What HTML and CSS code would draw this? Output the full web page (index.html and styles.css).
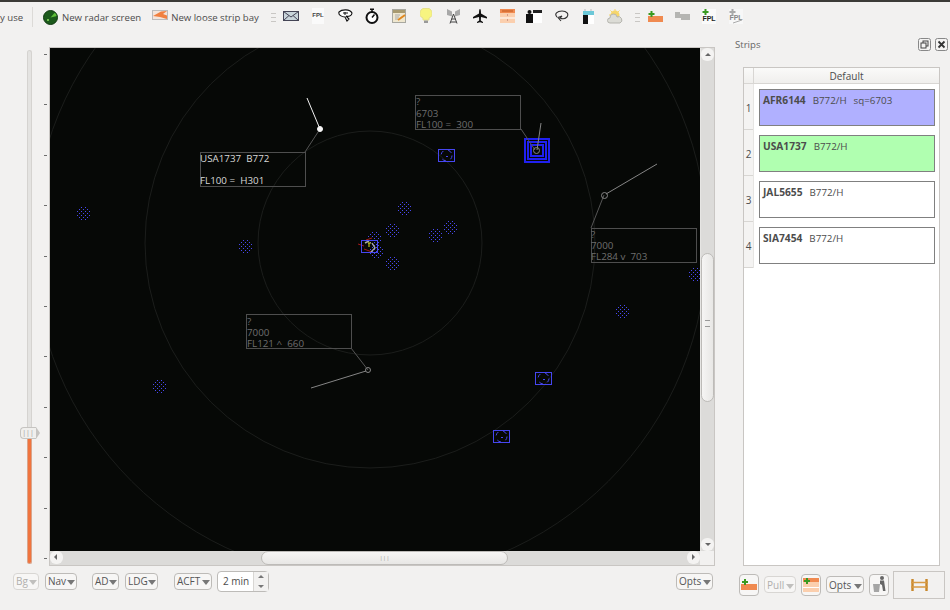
FILE: index.html
```html
<!DOCTYPE html>
<html lang="en">
<head>
    <meta charset="UTF-8">
    <title>Radar</title>
    <link rel="stylesheet" href="styles.css">
</head>
<body>
<div class="app">
    <div class="topline"></div>

    <!-- Toolbar -->
    <div class="toolbar">
        <span class="tool-text clipped">y use</span>
        <span class="tool-sep"></span>
        <svg class="tb-radar" width="15" height="15" viewBox="0 0 15 15"><circle cx="7.5" cy="7.5" r="7" fill="#1c5a1c"/><path d="M7.5 7.5L12 2.5A7 7 0 0 1 14 6z" fill="#5fc03a"/><circle cx="5" cy="10" r="1" fill="#8fe060"/><circle cx="7.5" cy="7.5" r="7" fill="none" stroke="#123a12"/></svg>
        <span class="tool-text">New radar screen</span>
        <svg class="tb-bay" width="16" height="12" viewBox="0 0 16 12"><rect x=".5" y=".5" width="15" height="9" fill="#f4e4da" stroke="#bbb"/><path d="M1 6L9 1.5L15 1L11 4L15 5.5V9L8 7z" fill="#f08040"/></svg>
        <span class="tool-text">New loose strip bay</span>
        <span class="handle first"><i></i><i></i><i></i></span>

        <span class="tool"><svg width="16" height="10" viewBox="0 0 16 10"><rect x=".5" y=".5" width="15" height="9" fill="#c8d4da" stroke="#445"/><path d="M.5 .5L8 6L15.5 .5M.5 9.5L6 4.5M15.5 9.5L10 4.5" fill="none" stroke="#445"/></svg></span>
        <span class="tool"><svg width="12" height="16" viewBox="0 0 12 16"><rect width="12" height="16" fill="#fafafa"/><text x="6" y="9" class="fpl-mini">FPL</text></svg></span>
        <span class="tool"><svg width="15" height="14" viewBox="0 0 15 14"><path d="M1 3C4 0 12 0 14 4C14 7 10 8 8 7L11 10L9 12L7 8C4 8 0 6 1 3z" fill="#fff" stroke="#111" stroke-width="1.1"/><path d="M5 4H10M7 3V6" stroke="#111"/></svg></span>
        <span class="tool"><svg width="14" height="16" viewBox="0 0 14 16"><circle cx="7" cy="9.5" r="5.5" fill="#fff" stroke="#111" stroke-width="2"/><path d="M5 1.2H9M7 2V4M7 9.5L9.5 6.5" stroke="#111" stroke-width="1.5"/></svg></span>
        <span class="tool"><svg width="15" height="15" viewBox="0 0 15 15"><rect x=".5" y=".5" width="13" height="13" fill="#efe7cf" stroke="#a8a8a0"/><rect x="1" y="1" width="12" height="3" fill="#a89a70"/><path d="M3 6H8M3 8H7M3 10H6" stroke="#aaa"/><path d="M6 11L13 6" stroke="#e08820" stroke-width="2"/></svg></span>
        <span class="tool"><svg width="12" height="16" viewBox="0 0 12 16"><path d="M6 .5A5 5 0 0 1 9 10V12H3V10A5 5 0 0 1 6 .5z" fill="#f7f480" stroke="#e5e08a"/><rect x="4" y="12.5" width="4" height="2.5" fill="#999"/></svg></span>
        <span class="tool"><svg width="13" height="16" viewBox="0 0 13 16"><path d="M0 1L5 3.5V8.5L0 7zM13 1L8 3.5V8.5L13 7z" fill="#a8a8a8"/><path d="M6.5 6L3 15.5M6.5 6L10 15.5M4.5 11H8.5M3.5 14H9.5" stroke="#444" fill="none"/></svg></span>
        <span class="tool"><svg width="14" height="14" viewBox="0 0 14 14"><path d="M7 0C7.8 0 8 2 8 4.5L14 8V9.5L8 8L7.8 11.5L10 13V14L7 13.3L4 14V13L6.2 11.5L6 8L0 9.5V8L6 4.5C6 2 6.2 0 7 0z" fill="#111"/></svg></span>
        <span class="tool"><svg width="15" height="14" viewBox="0 0 15 14"><rect width="15" height="14" fill="#fbcfae"/><rect width="15" height="4" fill="#f08a50"/><rect y="8.5" width="15" height="1" fill="#fff"/><path d="M7 6h1M7 11h1" stroke="#a66"/><path d="M2 2H13" stroke="#c05a20"/></svg></span>
        <span class="tool"><svg width="16" height="13" viewBox="0 0 16 13"><rect x="7" y="3" width="9" height="10" fill="#fff"/><rect y="4" width="7" height="9" fill="#111"/><rect x="7" y="0" width="9" height="3" fill="#222"/><circle cx="3.5" cy="2" r="2" fill="#111"/></svg></span>
        <span class="tool"><svg width="15" height="12" viewBox="0 0 15 12"><path d="M3 7C0 4 3 1 8 1C13 1 15 4 13 7C11 9 8 9 6 8L8 6L4 7.5L7 11" fill="none" stroke="#333" stroke-width="1.1"/></svg></span>
        <span class="tool"><svg width="11" height="15" viewBox="0 0 11 15"><rect y="5" width="5" height="10" fill="#111"/><rect x="5" y="5" width="6" height="10" fill="#fff"/><rect y="2" width="11" height="4" fill="#6cc8d8"/><path d="M2 0V2M8 0V2" stroke="#bbb"/></svg></span>
        <span class="tool"><svg width="16" height="15" viewBox="0 0 16 15"><circle cx="8" cy="6" r="4.5" fill="#f6d66a"/><path d="M8 0V2M2 6H4M3.5 1.5L5 3M12.5 1.5L11 3" stroke="#f6d66a"/><path d="M3 14A2.5 2.5 0 0 1 3 9A3.5 3.5 0 0 1 10 8A3 3 0 0 1 13 14z" fill="#dcdcd6" stroke="#b5b5ae"/></svg></span>
        <span class="handle second"><i></i><i></i><i></i></span>
        <span class="tool"><svg width="15" height="11" viewBox="0 0 15 11"><rect y="5" width="15" height="6" fill="#f08a50"/><path d="M3.5 0V6M.5 3H6.5" stroke="#3a9a20" stroke-width="2"/></svg></span>
        <span class="tool"><svg width="15" height="10" viewBox="0 0 15 10"><path d="M0 1H5V3H15V9H6V7H0z" fill="#b5b5b2"/></svg></span>
        <span class="tool"><svg width="14" height="15" viewBox="0 0 14 15"><rect width="14" height="15" y="0" fill="#fafafa"/><path d="M3.5 0V6M.5 3H6.5" stroke="#3a9a20" stroke-width="2"/><text x="7" y="12" class="fpl-mini dark">FPL</text></svg></span>
        <span class="tool"><svg width="14" height="15" viewBox="0 0 14 15"><rect width="14" height="15" fill="#f7f7f7"/><path d="M3.5 0V6M.5 3H6.5" stroke="#aaa" stroke-width="2"/><text x="7" y="11" class="fpl-mini pale">FPL</text><path d="M4 14L13 11" stroke="#aaa"/></svg></span>
    </div>

    <div class="main">
        <!-- Radar pane -->
        <div class="radar-pane">
            <div class="work">
                <div class="zoom">
                    <div class="zoom-track">
                        <div class="groove-top"></div>
                        <div class="zoom-handle"><span>|||</span></div>
                        <div class="groove-low"></div>
                    </div>
                    <div class="ticks"><i></i><i></i><i></i><i></i><i></i><i></i><i></i><i></i><i></i><i></i><i></i></div>
                </div>

                <div class="view">
                    <svg class="scope" width="650" height="503" viewBox="50 48 650 503">
                        <defs>
                            <path id="navdots" class="dots" d="M-2-6h1M2-6h1M-4-4h1M0-4h1M4-4h1M-6-2h1M-2-2h1M2-2h1M6-2h1M-4 0h1M0 0h1M4 0h1M-6 2h1M-2 2h1M2 2h1M6 2h1M-4 4h1M0 4h1M4 4h1M-2 6h1M2 6h1"/>
                            <g id="target">
                                <rect class="target-box" x="-8" y="-6" width="16" height="12"/>
                                <circle class="target-ring" r="5.5"/>
                                <path class="target-box" d="M-1 .5H1"/>
                            </g>
                        </defs>

                        <circle class="ring" cx="370" cy="243" r="112"/>
                        <circle class="ring" cx="370" cy="243" r="225"/>
                        <circle class="ring" cx="370" cy="243" r="337"/>

                        <use href="#navdots" x="83" y="213"/>
                        <use href="#navdots" x="245" y="246"/>
                        <use href="#navdots" x="404" y="208"/>
                        <use href="#navdots" x="392" y="230"/>
                        <use href="#navdots" x="435" y="235"/>
                        <use href="#navdots" x="450" y="227"/>
                        <use href="#navdots" x="392" y="263"/>
                        <use href="#navdots" x="374" y="238"/>
                        <use href="#navdots" x="376" y="251"/>
                        <use href="#navdots" x="622" y="311"/>
                        <use href="#navdots" x="695" y="274"/>
                        <use href="#navdots" x="159" y="386"/>

                        <use href="#target" x="446.5" y="155.5"/>
                        <use href="#target" x="543.5" y="378.5"/>
                        <use href="#target" x="501.5" y="436.5"/>

                        <!-- airfield in the middle -->
                        <path class="red" d="M358 244L364 246M366 240L372 238M364 249L372 252"/>
                        <path class="grey-mark" d="M365 243L369 241M372 243L375 248L371 252"/>
                        <path class="yellow" d="M369 243V247M368 243H371"/>
                        <rect class="target-box" x="361.5" y="240.5" width="16" height="12"/>

                        <rect class="square" x="525" y="139" width="24" height="23"/>
                        <rect class="square" x="528" y="142" width="18" height="17"/>
                        <rect class="square" x="531" y="145" width="12" height="11"/>

                        <path class="lead" d="M305 152L320 129"/>
                        <path class="lead" d="M521 129L535 150"/>
                        <path class="lead" d="M591 228L604 195"/>
                        <path class="lead" d="M351 348L368 370"/>

                        <path class="vector white" d="M320 129L307 98"/>
                        <circle class="blip white-fill" cx="320" cy="129" r="2.5"/>
                        <path class="vector" d="M537 150L541 123"/>
                        <circle class="blip" cx="536.5" cy="150.5" r="3"/>
                        <path class="vector" d="M606 194L657 164"/>
                        <circle class="blip" cx="604.5" cy="195.5" r="3"/>
                        <path class="vector" d="M366 371L311 388"/>
                        <circle class="blip" cx="368" cy="370" r="2.5"/>

                        <rect class="tag" x="200.5" y="152.5" width="105" height="34"/>
                        <text class="tag-text strong" x="200" y="162">USA1737  B772</text>
                        <text class="tag-text strong" x="200" y="184">FL100 =  H301</text>

                        <rect class="tag" x="415.5" y="95.5" width="105" height="34"/>
                        <text class="tag-text" x="416" y="105">?</text>
                        <text class="tag-text" x="416" y="117">6703</text>
                        <text class="tag-text" x="416" y="128">FL100 =  300</text>

                        <rect class="tag" x="591.5" y="228.5" width="105" height="34"/>
                        <text class="tag-text" x="591" y="238">?</text>
                        <text class="tag-text" x="591" y="249">7000</text>
                        <text class="tag-text" x="591" y="260">FL284 v  703</text>

                        <rect class="tag" x="246.5" y="314.5" width="105" height="34"/>
                        <text class="tag-text" x="247" y="325">?</text>
                        <text class="tag-text" x="247" y="336">7000</text>
                        <text class="tag-text" x="247" y="347">FL121 ^  660</text>
                    </svg>

                    <div class="vbar">
                        <span class="sb-btn up"></span>
                        <div class="vtrack"><div class="vthumb"><span class="grip-h"></span></div></div>
                        <span class="sb-btn down"></span>
                    </div>
                    <div class="hbar">
                        <span class="sb-btn left"></span>
                        <div class="htrack"><div class="hthumb"><span class="grip-v">|||</span></div></div>
                        <span class="sb-btn right"></span>
                    </div>
                    <div class="corner"></div>
                </div>
            </div>

            <!-- Radar buttons -->
            <div class="radar-buttons">
                <span class="btn off bg">Bg<b></b></span>
                <span class="btn nav">Nav<b></b></span>
                <span class="btn ad">AD<b></b></span>
                <span class="btn ldg">LDG<b></b></span>
                <span class="btn acft">ACFT<b></b></span>
                <span class="spin"><span class="spin-val">2 min</span><span class="spin-arrows"><i class="up"></i><i class="down"></i></span></span>
                <span class="btn opts-right">Opts<b></b></span>
            </div>
        </div>

        <!-- Strips dock -->
        <div class="dock">
            <div class="dock-head">
                <span>Strips</span>
                <span class="dock-icons">
                    <svg width="13" height="13" viewBox="0 0 13 13"><rect x=".5" y=".5" width="12" height="12" rx="2" fill="#f4f3f2" stroke="#888"/><rect x="5" y="3" width="5" height="5" fill="none" stroke="#444"/><rect x="3" y="5" width="5" height="5" fill="#f4f3f2" stroke="#444"/></svg>
                    <svg width="13" height="13" viewBox="0 0 13 13"><rect x=".5" y=".5" width="12" height="12" rx="2" fill="#f4f3f2" stroke="#888"/><path d="M3.5 3.5L9.5 9.5M9.5 3.5L3.5 9.5" stroke="#333" stroke-width="1.8"/></svg>
                </span>
            </div>
            <div class="strips">
                <div class="strips-head"><span class="corner-cell"></span><span class="col-title">Default</span></div>
                <div class="strips-body">
                    <div class="row-nums"><span>1</span><span>2</span><span>3</span><span>4</span></div>
                    <div class="strip-list">
                        <div class="strip-row"><div class="strip blue"><b>AFR6144</b><span>B772/H</span><span>sq=6703</span></div></div>
                        <div class="strip-row"><div class="strip green"><b>USA1737</b><span>B772/H</span></div></div>
                        <div class="strip-row"><div class="strip"><b>JAL5655</b><span>B772/H</span></div></div>
                        <div class="strip-row"><div class="strip"><b>SIA7454</b><span>B772/H</span></div></div>
                    </div>
                </div>
            </div>
            <div class="dock-buttons">
                <span class="icon-btn"><svg width="16" height="11" viewBox="0 0 16 11"><rect y="5" width="16" height="6" fill="#f08a50"/><path d="M4 0V6M1 3H7" stroke="#3a9a20" stroke-width="2"/></svg></span>
                <span class="btn off pull">Pull<b></b></span>
                <span class="icon-btn"><svg width="16" height="14" viewBox="0 0 16 14"><rect width="16" height="14" fill="#fbcfae"/><rect width="16" height="4" fill="#f08a50"/><rect y="9" width="16" height="1" fill="#fff"/><path d="M4 0V6M1 3H7" stroke="#3a9a20" stroke-width="2"/></svg></span>
                <span class="btn opts">Opts<b></b></span>
                <span class="icon-btn trash"><svg width="15" height="17" viewBox="0 0 15 17"><circle cx="10" cy="2" r="2" fill="#666"/><path d="M8 4.5H12L13.5 15H11L10 9L8 8z" fill="#666"/><path d="M1 8H8L7 16H2z" fill="#a5a5a5"/></svg></span>
                <span class="bay-box"><svg width="17" height="12" viewBox="0 0 17 12"><path d="M1.5 0V12M15.5 0V12" stroke="#c8872a" stroke-width="2.4"/><path d="M0 3.5H17M0 8H17" stroke="#d79a45" stroke-width="1.6"/></svg></span>
            </div>
        </div>
    </div>
</div>
</body>
</html>
```

FILE: styles.css
```css
/* page */
body {
    margin: 0;
    background-color: #f2f1f0;
    color: #4c4c4c;
    font-family: "Open Sans", "Noto Sans", sans-serif;
    font-size: 9.6px;
}

.app {
    width: 950px;
    height: 610px;
    overflow: hidden;
}

.topline {
    height: 2px;
    background-color: #3c3b37;
}

/* toolbar */
.toolbar {
    display: flex;
    align-items: center;
    height: 30px;
}

.tool-text {
    white-space: nowrap;
}

.clipped {
    width: 21px;
}

.tool-sep {
    width: 1px;
    height: 20px;
    margin: 0 10px 0 11px;
    background-color: #dcdad7;
}

.tb-radar {
    margin-right: 4px;
}

.tb-bay {
    margin: 0 3px 2px 11px;
}

.tool {
    display: flex;
    justify-content: center;
    align-items: center;
    width: 27px;
    height: 24px;
    margin-top: -2px;
}

.handle {
    display: flex;
    flex-direction: column;
    gap: 3px;
    width: 5px;
}

.handle.first {
    margin: 0 2px 0 12px;
}

.handle.second {
    margin: 0 2px 0 6px;
}

.handle i {
    height: 1px;
    background-color: #c9c7c4;
}

.fpl-mini {
    font-family: "Liberation Sans", sans-serif;
    font-size: 6px;
    font-weight: bold;
    text-anchor: middle;
    fill: #444;
}

.fpl-mini.dark {
    font-size: 7px;
    fill: #222;
}

.fpl-mini.pale {
    font-size: 7px;
    fill: #888;
}

/* radar pane */
.main {
    display: flex;
    height: 578px;
}

.radar-pane {
    width: 735px;
    padding-top: 15px;
}

.work {
    display: flex;
    height: 519px;
}

.zoom {
    display: flex;
    width: 49px;
    padding-left: 19px;
    box-sizing: border-box;
}

.zoom-track {
    display: flex;
    flex-direction: column;
    align-items: center;
    width: 20px;
    padding-top: 3px;
}

.groove-top {
    width: 5px;
    height: 377px;
    background-color: #e4e3e1;
    border: 1px solid #d5d3d0;
    border-bottom: 0;
    box-sizing: border-box;
    border-radius: 3px 3px 0 0;
}

.groove-low {
    width: 5px;
    height: 125px;
    background-color: #f0743e;
    border: 1px solid #d9a58c;
    border-top: 0;
    box-sizing: border-box;
    border-radius: 0 0 3px 3px;
}

.zoom-handle {
    position: relative;
    width: 16px;
    height: 12px;
    margin-right: 3px;
    background-color: #f0efed;
    border: 1px solid #c6c4c1;
    border-right: 0;
    border-radius: 4px 0 0 4px;
    box-sizing: border-box;
    color: #999;
    font-size: 7px;
    line-height: 9px;
    text-align: center;
}

/* pointed end of the handle */
.zoom-handle::after {
    content: "";
    position: absolute;
    right: -4px;
    top: -1px;
    border: 6px solid transparent;
    border-left: 4px solid #c6c4c1;
    border-right: 0;
}

.ticks {
    display: flex;
    flex-direction: column;
    justify-content: space-between;
    height: 505px;
    margin: 7px 0 0 5px;
}

.ticks i {
    display: block;
    width: 3px;
    height: 1px;
    background-color: #6e6e6e;
}

.view {
    display: grid;
    grid-template-columns: 650px 14px;
    grid-template-rows: 503px 14px;
    width: 666px;
    height: 519px;
    box-sizing: border-box;
    border: 1px solid #c9c6c3;
    background-color: #dcdbd9;
}

.scope {
    display: block;
    background-color: #060806;
}

.ring {
    fill: none;
    stroke: #1b1d1b;
}

.dots {
    fill: none;
    stroke: #4848f0;
    shape-rendering: crispEdges;
}

.target-box {
    fill: none;
    stroke: #4646f0;
    shape-rendering: crispEdges;
}

.target-ring {
    fill: none;
    stroke: #4646f0;
    stroke-dasharray: 4 5;
}

.red {
    fill: none;
    stroke: #a01818;
}

.grey-mark {
    fill: none;
    stroke: #a8a8a8;
    stroke-width: 1.4;
}

.yellow {
    fill: none;
    stroke: #e0e020;
}

.square {
    fill: none;
    stroke: #2020f0;
    stroke-width: 2;
    shape-rendering: crispEdges;
}

.lead {
    fill: none;
    stroke: #555;
}

.vector {
    fill: none;
    stroke: #858585;
}

.vector.white {
    stroke: #f2f2f2;
}

.blip {
    fill: none;
    stroke: #858585;
}

.blip.white-fill {
    fill: #f5f5f5;
    stroke: #f5f5f5;
}

.tag {
    fill: none;
    stroke: #4e4e4e;
}

.tag-text {
    font-family: "Open Sans", "Noto Sans", sans-serif;
    font-size: 9.8px;
    white-space: pre;
    fill: #6e6e6e;
}

.tag-text.strong {
    fill: #d8d8d8;
}

/* scrollbars */
.vbar {
    display: flex;
    flex-direction: column;
    border-left: 1px solid #e6e5e3;
}

.hbar {
    display: flex;
}

.vtrack,
.htrack {
    flex: 1;
    background-color: #dcdbd9;
}

.vthumb {
    height: 149px;
    margin-top: 192px;
    background: linear-gradient(to right, #f6f5f4, #e8e7e5);
    border: 1px solid #bdbbb8;
    border-radius: 7px;
    box-sizing: border-box;
}

.grip-h {
    display: block;
    width: 5px;
    height: 5px;
    margin: 66px auto 0;
    border-top: 1px solid #999;
    border-bottom: 1px solid #999;
}

.hthumb {
    width: 247px;
    height: 14px;
    margin-left: 198px;
    background: linear-gradient(to bottom, #f6f5f4, #e8e7e5);
    border: 1px solid #bdbbb8;
    border-radius: 7px;
    box-sizing: border-box;
    color: #999;
    font-size: 6px;
    line-height: 12px;
    text-align: center;
}

.sb-btn {
    position: relative;
    display: block;
    flex: none;
    width: 13px;
    height: 13px;
    background-color: #f4f3f2;
    border-radius: 6px;
}

.sb-btn::after {
    content: "";
    position: absolute;
    left: 4px;
    top: 5px;
    border: 3px solid transparent;
}

.sb-btn.up::after {
    top: 2px;
    border-bottom-color: #666;
}

.sb-btn.down::after {
    top: 5px;
    border-top-color: #666;
}

.sb-btn.left::after {
    left: 1px;
    top: 3px;
    border-right-color: #666;
}

.sb-btn.right::after {
    left: 5px;
    top: 3px;
    border-left-color: #666;
}

.corner {
    background-color: #f2f1f0;
}

/* buttons under the radar */
.radar-buttons {
    display: flex;
    align-items: center;
    height: 26px;
    padding: 2px 22px 0 13px;
}

.btn {
    display: flex;
    align-items: center;
    justify-content: space-between;
    height: 17px;
    padding: 0 1px 0 2px;
    background-color: #f7f6f5;
    border: 1px solid #bdbbb8;
    border-radius: 4px;
    box-sizing: border-box;
    color: #555;
    font-size: 10px;
}

.btn b {
    width: 0;
    height: 0;
    margin-top: 3px;
    border: 4px solid transparent;
    border-top: 5px solid #777;
    border-bottom: 0;
}

.btn.off {
    border-color: #d8d6d3;
    color: #b0afad;
}

.btn.off b {
    border-top-color: #c0bfbd;
}

.bg {
    width: 26px;
}

.nav {
    width: 32px;
    margin-left: 6px;
}

.ad {
    width: 27px;
    margin-left: 15px;
}

.ldg {
    width: 33px;
    margin-left: 6px;
}

.acft {
    width: 38px;
    margin-left: 16px;
}

.opts-right {
    width: 37px;
    margin-left: auto;
}

.spin {
    display: flex;
    width: 52px;
    height: 21px;
    margin-left: 5px;
    background-color: #fff;
    border: 1px solid #bdbbb8;
    border-radius: 4px;
    box-sizing: border-box;
}

.spin-val {
    flex: 1;
    padding-left: 5px;
    line-height: 19px;
    border-right: 1px solid #d8d6d3;
    font-size: 10px;
}

.spin-arrows {
    display: flex;
    flex-direction: column;
    align-items: center;
    justify-content: space-between;
    width: 14px;
    padding: 3px 0;
    box-sizing: border-box;
    background-color: #f2f1f0;
}

.spin-arrows i {
    width: 0;
    height: 0;
    border: 3px solid transparent;
}

.spin-arrows .up {
    border-bottom-color: #777;
    border-top: 0;
}

.spin-arrows .down {
    border-top-color: #777;
    border-bottom: 0;
}

/* strips dock */
.dock {
    flex: 1;
    display: flex;
    flex-direction: column;
}

.dock-head {
    display: flex;
    justify-content: space-between;
    height: 35px;
    padding: 6px 2px 0 0;
    box-sizing: border-box;
    color: #666;
}

.dock-icons {
    display: flex;
    gap: 4px;
    height: 13px;
}

.strips {
    width: 197px;
    height: 499px;
    margin-left: 8px;
    background-color: #fff;
    border: 1px solid #c9c6c3;
    box-sizing: border-box;
}

.strips-head {
    display: flex;
    height: 15px;
    border-bottom: 1px solid #d8d6d3;
    background: linear-gradient(to bottom, #fafaf9, #f0efed);
}

.corner-cell {
    width: 9px;
    border-right: 1px solid #d8d6d3;
}

.col-title {
    flex: 1;
    text-align: center;
    line-height: 17px;
    font-size: 10px;
}

.strips-body {
    display: flex;
}

.row-nums {
    display: flex;
    flex-direction: column;
    width: 10px;
    box-sizing: border-box;
    border-right: 1px solid #e6e5e3;
}

.row-nums span {
    height: 46px;
    background-color: #f4f3f2;
    border-bottom: 1px solid #d8d6d3;
    box-sizing: border-box;
    line-height: 48px;
    text-align: center;
    font-size: 10px;
    overflow: hidden;
}

.strip-list {
    flex: 1;
}

.strip-row {
    height: 46px;
    padding: 5px 4px 0 5px;
    box-sizing: border-box;
}

.strip {
    display: flex;
    gap: 7px;
    align-items: baseline;
    height: 37px;
    padding: 3px 3px 0;
    background-color: #fff;
    border: 1px solid #808080;
    box-sizing: border-box;
    font-size: 9.8px;
}

.strip b {
    font-size: 10.2px;
    font-weight: bold;
}

.strip.blue {
    background-color: #b0b0ff;
}

.strip.green {
    background-color: #b0ffb0;
}

.dock-buttons {
    display: flex;
    align-items: center;
    gap: 5px;
    height: 37px;
    margin-left: 4px;
}

.pull {
    width: 32px;
}

.opts {
    width: 38px;
}

.icon-btn {
    display: flex;
    align-items: center;
    justify-content: center;
    width: 20px;
    height: 22px;
    background-color: #f7f6f5;
    border: 1px solid #bdbbb8;
    border-radius: 4px;
    box-sizing: border-box;
}

.bay-box {
    display: flex;
    align-items: center;
    justify-content: center;
    width: 52px;
    height: 28px;
    margin-left: -1px;
    border: 1px solid #c9c6c3;
    box-sizing: border-box;
}
```
